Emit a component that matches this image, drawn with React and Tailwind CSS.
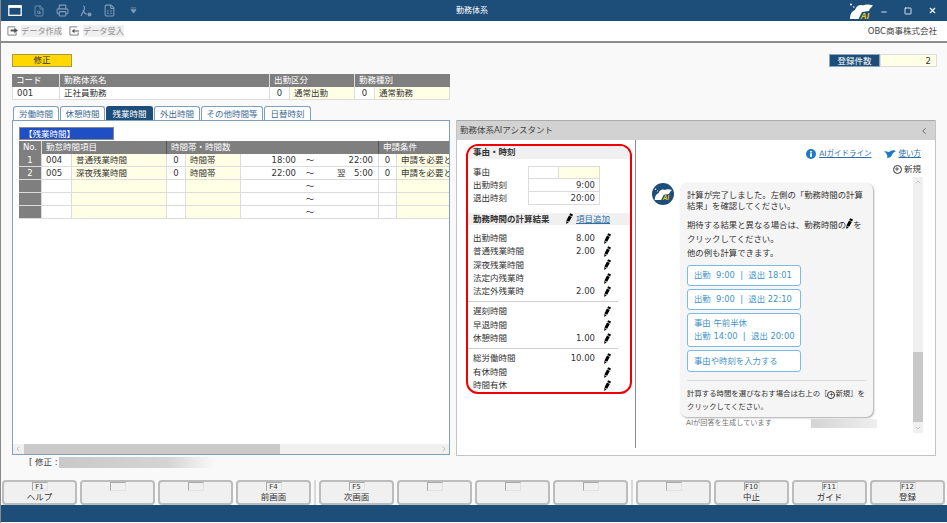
import { Printer, FileSearch, ChevronUp, ChevronDown, ChevronLeft, ChevronRight, Minus, X, Square, Plus, FileSpreadsheet } from "lucide-react";

const Pen = ({ className = "" }) => (
    <svg viewBox="0 0 7 11" className={`w-[7px] h-[11px] shrink-0 ${className}`}>
        <path d="M4.2 0.2 L7 1.6 L6.1 3.4 L3.3 2 Z" fill="#000" />
        <path d="M3 2.6 L5.8 4 L3.2 8.8 L0.4 7.4 Z" fill="#000" />
        <path d="M0.3 8 L2.7 9.2 L0.3 11 Z" fill="#000" />
    </svg>
);

const AiMark = ({ className = "" }) => (
    <svg viewBox="0 0 24 16" className={className}>
        <path d="M1 16 C1 11 3 8 6 7 C7 3 11 1 14 2.5 C17 1 21 1.5 24 2.5 C22 4.5 20.5 6 20 8 L13 9 L9.5 16 Z" fill="#fff" />
        <circle cx="2" cy="1.6" r="1" fill="#fff" />
        <circle cx="4.8" cy="4" r="0.8" fill="#fff" />
        <text x="11.5" y="15.8" fontSize="8.5" fontWeight="700" fontStyle="italic" fill="#f2c811" fontFamily="Liberation Sans, sans-serif">AI</text>
    </svg>
);

const ExportIcon = ({ flip }) => (
    <svg viewBox="0 0 12 12" className="w-[11px] h-[11px] shrink-0">
        <path d="M9 2 H1 V11 H10 V8" fill="none" stroke="#777" strokeWidth="1" />
        {flip
            ? <path d="M11 6 H6 V4 L3 6.5 L6 9 V7 H11 Z" fill="#555" />
            : <path d="M4 7 H8 V9 L12 6 L8 3 V5 H4 Z" fill="#555" />}
    </svg>
);

const tabs = ["労働時間", "休憩時間", "残業時間", "外出時間", "その他時間等", "日替時刻"];
const tabWidths = ["w-[46px]", "w-[45px]", "w-[47px]", "w-[46px]", "w-[62px]", "w-[47px]"];

const rows = [
    { no: "1", code: "004", name: "普通残業時間", n: "0", type: "時間帯", from: "18:00", to: "22:00", c: "0", cond: "申請を必要とする" },
    { no: "2", code: "005", name: "深夜残業時間", n: "0", type: "時間帯", from: "22:00", to: "翌　5:00", c: "0", cond: "申請を必要とする" },
    {},
    {},
    {},
];

const cols = "grid grid-cols-[23px_30px_95px_19px_55px_55px_28px_55px_18px_52px]";

const Cell = ({ className = "", children }) => (
    <div className={`h-[13px] leading-[12px] border-b border-r border-[#dcdcdc] px-[4px] whitespace-nowrap overflow-hidden ${className}`}>{children}</div>
);

const resultGroups = [
    [["出勤時間", "8.00"], ["普通残業時間", "2.00"], ["深夜残業時間", ""], ["法定内残業時", ""], ["法定外残業時", "2.00"]],
    [["遅刻時間", ""], ["早退時間", ""], ["休憩時間", "1.00"]],
    [["総労働時間", "10.00"], ["有休時間", ""], ["時間有休", ""]],
];

const keys = [
    [["F1", "ヘルプ"], ["", ""], ["", ""], ["F4", "前画面"]],
    [["F5", "次画面"], ["", ""], ["", ""], ["", ""]],
    [["", ""], ["F10", "中止"], ["F11", "ガイド"], ["F12", "登録"]],
];

const ChatButton = ({ children, className = "" }) => (
    <div className={`w-[114px] border border-[#7db9e0] rounded-[3px] px-[6px] text-[#3f93c9] bg-white flex flex-col justify-center whitespace-nowrap ${className}`}>{children}</div>
);

const App = () => {
    return (
        <div className="w-[947px] h-[523px] flex flex-col bg-[#f9f9f9] overflow-hidden text-[8.5px] text-[#333] font-['DejaVu_Sans','Noto_Sans_CJK_JP',sans-serif] border-l border-[#8a8a8a]">
            {/* title bar */}
            <div className="h-[21px] shrink-0 bg-[#1d4e79] flex items-center text-white">
                <div className="w-[411px] shrink-0 flex items-center gap-[11px] pl-[7px]">
                    <svg viewBox="0 0 15 12" className="w-[14px] h-[11px]">
                        <rect x="0.75" y="0.75" width="13.5" height="10.5" fill="none" stroke="#fff" strokeWidth="1.4" />
                        <rect x="0.75" y="0.75" width="13.5" height="2.4" fill="#fff" />
                    </svg>
                    <FileSearch className="w-[12px] h-[12px] text-[#7f9cb8]" strokeWidth={1.6} />
                    <Printer className="w-[13px] h-[13px] text-[#7f9cb8]" strokeWidth={2} />
                    <svg viewBox="0 0 12 12" className="w-[12px] h-[12px]">
                        <path d="M3 1 C5 1 5 4 3 7 L1 11 M3 5 C4 8 6 9 7 9" fill="none" stroke="#7f9cb8" strokeWidth="1.2" />
                        <circle cx="9.5" cy="9.5" r="2" fill="#7f9cb8" />
                    </svg>
                    <FileSpreadsheet className="w-[13px] h-[13px] text-[#7f9cb8]" strokeWidth={2} />
                    <svg viewBox="0 0 8 8" className="w-[7px] h-[7px] ml-[3px]">
                        <path d="M1 1 H7 M1 3 H7 L4 7 Z" fill="#7f9cb8" stroke="#7f9cb8" strokeWidth="0.8" />
                    </svg>
                </div>
                <div className="w-[120px] text-center text-[8px]">勤務体系</div>
                <div className="flex-1 flex items-center justify-end">
                    <AiMark className="w-[24px] h-[16px] mr-[7px]" />
                    <Minus className="w-[8px] h-[8px] mr-[16px] translate-y-[1px]" strokeWidth={2.5} />
                    <Square className="w-[8px] h-[8px] mr-[16px]" strokeWidth={2.5} />
                    <X className="w-[9px] h-[9px] mr-[10px]" strokeWidth={3} />
                </div>
            </div>

            {/* toolbar */}
            <div className="h-[22px] shrink-0 bg-white border-b-2 border-[#8c8c8c] flex items-center pl-[6px] pr-[10px]">
                <div className="flex items-center gap-[3px] mr-[7px] text-[8.2px]">
                    <ExportIcon />
                    <span className="bg-[#f0f0f0] text-[#8d8d8d]">データ作成</span>
                </div>
                <div className="flex items-center gap-[3px] text-[8.2px]">
                    <ExportIcon flip />
                    <span className="bg-[#f0f0f0] text-[#8d8d8d]">データ受入</span>
                </div>
                <span className="ml-auto text-[#444]">OBC商事株式会社</span>
            </div>

            <div className="flex-1 flex flex-col pl-[11px] pr-[10px]">
                {/* mode and count */}
                <div className="flex justify-between items-center mt-[11px] h-[13px]">
                    <div className="w-[60px] h-[13px] leading-[11px] text-center bg-[#ffd800] border border-[#a99a3a] text-[#333]">修正</div>
                    <div className="flex w-[108px] h-[13px] leading-[12px]">
                        <div className="w-[51px] bg-[#1d4e79] text-white text-center border border-[#8ea6bd]">登録件数</div>
                        <div className="flex-1 bg-[#ffffe6] border border-[#dcdcdc] text-right pr-[5px]">2</div>
                    </div>
                </div>

                {/* summary table */}
                <div className="mt-[7px] w-[438px] grid grid-cols-[48px_210px_20px_65px_20px_75px] leading-[12px]">
                    <div className="h-[13px] bg-[#7f7f7f] text-white pl-[4px] border-r border-[#ddd]">コード</div>
                    <div className="h-[13px] bg-[#7f7f7f] text-white pl-[4px] border-r border-[#ddd]">勤務体系名</div>
                    <div className="col-span-2 h-[13px] bg-[#7f7f7f] text-white pl-[4px] border-r border-[#ddd]">出勤区分</div>
                    <div className="col-span-2 h-[13px] bg-[#7f7f7f] text-white pl-[4px]">勤務種別</div>
                    <div className="h-[13px] bg-white border border-t-0 border-[#dcdcdc] pl-[4px]">001</div>
                    <div className="h-[13px] bg-white border-b border-r border-[#dcdcdc] pl-[4px]">正社員勤務</div>
                    <div className="h-[13px] bg-white border-b border-r border-[#dcdcdc] text-center">0</div>
                    <div className="h-[13px] bg-[#ffffe6] border-b border-r border-[#dcdcdc] pl-[4px]">通常出勤</div>
                    <div className="h-[13px] bg-white border-b border-r border-[#dcdcdc] text-center">0</div>
                    <div className="h-[13px] bg-[#ffffe6] border-b border-r border-[#dcdcdc] pl-[4px]">通常勤務</div>
                </div>

                <div className="flex mt-[6px] gap-[6px]">
                    {/* left panel */}
                    <div className="w-[438px] shrink-0">
                        <div className="flex h-[14px] gap-[1px] pl-[1px]">
                            {tabs.map((t, i) => (
                                <div
                                    key={t}
                                    className={`${tabWidths[i]} text-center leading-[15px] rounded-t-[3px] border border-b-0 ${i === 2 ? "bg-[#1d4e79] text-white border-[#1d4e79]" : "bg-white text-[#3d6a92] border-[#7f9fbd]"}`}
                                >
                                    {t}
                                </div>
                            ))}
                        </div>
                        <div className="h-[335px] bg-white border border-[#7f9fbd] flex flex-col overflow-hidden">
                            <div className="ml-[6px] mt-[6px] w-[95px] h-[13px] leading-[12px] bg-[#1f4fc4] text-white pl-[4px] border border-[#8a8a8a]">【残業時間】</div>
                            <div className={`ml-[6px] ${cols} w-[430px] mt-[1px]`}>
                                <div className="h-[13px] leading-[12px] bg-[#7f7f7f] text-white text-center border-r border-[#ddd]">No.</div>
                                <div className="col-span-2 h-[13px] leading-[12px] bg-[#7f7f7f] text-white pl-[4px] border-r border-[#555]">勤怠時間項目</div>
                                <div className="col-span-5 h-[13px] leading-[12px] bg-[#7f7f7f] text-white pl-[4px] border-r border-[#555]">時間帯・時間数</div>
                                <div className="col-span-2 h-[13px] leading-[12px] bg-[#7f7f7f] text-white pl-[4px]">申請条件</div>
                                {rows.map((r, i) => (
                                    <div key={i} className="contents">
                                        <Cell className="bg-[#7f7f7f] text-white text-center border-[#bdbdbd]">{r.no}</Cell>
                                        <Cell>{r.code}</Cell>
                                        <Cell className="bg-[#ffffe6]">{r.name}</Cell>
                                        <Cell className="text-center !px-0">{r.n}</Cell>
                                        <Cell className="bg-[#ffffe6]">{r.type}</Cell>
                                        <Cell className="text-right border-r-0 !px-0">{r.from}</Cell>
                                        <Cell className="text-center border-r-0 !px-0">～</Cell>
                                        <Cell className="text-right !pl-0 !pr-[5px]">{r.to}</Cell>
                                        <Cell className="text-center !px-0">{r.c}</Cell>
                                        <Cell className="bg-[#ffffe6] border-r-0">{r.cond}</Cell>
                                    </div>
                                ))}
                            </div>
                            <div className="mt-auto h-[10px] bg-[#f0f0f0] flex items-center text-[#aaa]">
                                <ChevronLeft className="w-[8px] h-[8px] mx-[1px]" />
                                <div className="w-[256px] h-[10px] bg-[#cacaca] ml-[1px]" />
                                <ChevronRight className="w-[8px] h-[8px] ml-auto mr-[1px]" />
                            </div>
                        </div>
                    </div>

                    {/* assistant panel */}
                    <div className="w-[480px] shrink-0 mt-[14px] h-[336px] bg-white border border-[#c4c4c4] flex flex-col">
                        <div className="h-[20px] shrink-0 bg-[#d2d2d2] border-t border-[#aaa] flex items-center justify-between pl-[3px] pr-[6px] text-[#444] -mt-[1px]">
                            <span>勤務体系AIアシスタント</span>
                            <ChevronLeft className="w-[10px] h-[10px] text-[#555]" />
                        </div>
                        <div className="flex-1 flex min-h-0">
                            {/* calculation column */}
                            <div className="w-[179px] shrink-0 border-r border-[#8c8c8c] mb-[7px] pl-[9px]">
                                <div className="mt-[4px] w-[166px] h-[250px] border-[2.5px] border-[#f00000] rounded-[12px] overflow-hidden flex flex-col">
                                    <div className="h-[13px] leading-[13px] bg-[#f0f0f0] pl-[5px] font-bold text-[#333] shrink-0">事由・時刻</div>
                                    <div className="mt-[7px] flex h-[13px] leading-[12px] pl-[5px]">
                                        <span className="w-[55px]">事由</span>
                                        <div className="w-[31px] border border-[#dcdcdc]" />
                                        <div className="w-[41px] bg-[#ffffe6] border-y border-r border-[#dcdcdc]" />
                                    </div>
                                    {[["出勤時刻", "9:00"], ["退出時刻", "20:00"]].map(([l, v]) => (
                                        <div key={l} className="flex h-[13px] leading-[12px] pl-[5px]">
                                            <span className="w-[55px]">{l}</span>
                                            <div className="w-[72px] border-x border-b border-[#dcdcdc] text-right pr-[4px]">{v}</div>
                                        </div>
                                    ))}
                                    <div className="mt-[8px] h-[12px] leading-[12px] bg-[#f0f0f0] flex items-center pl-[5px] shrink-0">
                                        <span className="font-bold w-[93px]">勤務時間の計算結果</span>
                                        <Pen />
                                        <span className="ml-[3px] text-[#2f6fa8] underline">項目追加</span>
                                    </div>
                                    <div className="mt-[7px]">
                                        {resultGroups.map((g, gi) => (
                                            <div key={gi} className={gi ? "mt-[3px] pt-[3px] border-t border-[#cfcfcf] w-[150px] " : "w-[150px]"}>
                                                {g.map(([l, v]) => (
                                                    <div key={l} className="flex items-center h-[13.3px] pl-[5px]">
                                                        <span className="flex-1">{l}</span>
                                                        <span className="w-[40px] text-right">{v}</span>
                                                        <Pen className="ml-[9px] mr-[7px]" />
                                                    </div>
                                                ))}
                                            </div>
                                        ))}
                                    </div>
                                </div>
                            </div>

                            {/* chat column */}
                            <div className="flex-1 flex flex-col min-w-0">
                                <div className="flex justify-end items-center h-[12px] mt-[8px] pr-[14px] text-[#2f6fa8]">
                                    <svg viewBox="0 0 10 10" className="w-[10px] h-[10px] mr-[3px]">
                                        <circle cx="5" cy="5" r="5" fill="#1f7ac4" />
                                        <rect x="4.1" y="4.2" width="1.8" height="3.8" fill="#fff" />
                                        <rect x="4.1" y="2" width="1.8" height="1.5" fill="#fff" />
                                    </svg>
                                    <span className="underline mr-[12px] text-[7.5px]">AIガイドライン</span>
                                    <svg viewBox="0 0 12 8" className="w-[12px] h-[8px] mr-[3px]">
                                        <path d="M0 1 L5 2 C8 0 10 0 12 1 L9 3 C8 6 6 8 3 8 C4 6 3 4 0 1 Z" fill="#1f7ac4" />
                                    </svg>
                                    <span className="underline text-[7.5px]">使い方</span>
                                </div>
                                <div className="flex justify-end items-center h-[12px] mt-[3px] pr-[14px] text-[#333]">
                                    <span className="w-[9px] h-[9px] rounded-full border border-[#333] flex items-center justify-center mr-[2px]">
                                        <Plus className="w-[6px] h-[6px]" strokeWidth={3} />
                                    </span>
                                    新規
                                </div>
                                <div className="flex items-start mt-[2px] pl-[16px] pr-[12px]">
                                    <div className="mt-[6px] w-[22px] h-[22px] rounded-full bg-[#1d4e79] flex items-center justify-center shrink-0">
                                        <AiMark className="w-[18px] h-[12px]" />
                                    </div>
                                    <div className="mt-[6px] ml-[6px] w-[193px] shrink-0">
                                        <div className="h-[234px] bg-[#f5f5f5] rounded-[7px] shadow-[1px_1px_2px_#a8a8a8] px-[7px] pt-[7px] text-[8.4px] text-[#333] flex flex-col">
                                            <p className="leading-[11px]">計算が完了しました。左側の「勤務時間の計算結果」を確認してください。</p>
                                            <p className="leading-[14px] mt-[6px] whitespace-nowrap">
                                                期待する結果と異なる場合は、勤務時間の<Pen className="inline-block align-[-1px]" />を<br />クリックしてください。
                                            </p>
                                            <p className="leading-[14px]">他の例も計算できます。</p>
                                            <ChatButton className="h-[21px] mt-[5px]">出勤&nbsp;&nbsp;9:00&nbsp;&nbsp;|&nbsp;&nbsp;退出 18:01</ChatButton>
                                            <ChatButton className="h-[21px] mt-[3px]">出勤&nbsp;&nbsp;9:00&nbsp;&nbsp;|&nbsp;&nbsp;退出 22:10</ChatButton>
                                            <ChatButton className="h-[34px] mt-[3px] leading-[13px]">
                                                <span>事由 午前半休</span>
                                                <span>出勤 14:00&nbsp;&nbsp;|&nbsp;&nbsp;退出 20:00</span>
                                            </ChatButton>
                                            <ChatButton className="h-[22px] mt-[3px]">事由や時刻を入力する</ChatButton>
                                            <div className="mt-[8px] border-t border-[#dcdcdc] pt-[6px] leading-[13px] whitespace-nowrap text-[7.4px]">
                                                計算する時間を選びなおす場合は右上の［
                                                <span className="inline-flex w-[8px] h-[8px] rounded-full border border-[#333] items-center justify-center align-[-1px]">
                                                    <Plus className="w-[5px] h-[5px]" strokeWidth={3} />
                                                </span>
                                                新規］を<br />クリックしてください。
                                            </div>
                                        </div>
                                        <div className="flex items-center mt-[2px] pl-[6px] text-[#777] text-[7.2px] h-[9px]">
                                            <span>AIが回答を生成しています</span>
                                            <div className="ml-auto -mr-[4px] w-[66px] h-[9px] bg-gradient-to-r from-[#d4d4d4] to-[#efefef]" />
                                        </div>
                                    </div>
                                    <div className="ml-auto w-[10px] h-[256px] bg-[#f0f0f0] flex flex-col items-center text-[#aaa]">
                                        <ChevronUp className="w-[8px] h-[8px] mt-[1px]" />
                                        <div className="w-[10px] h-[70px] bg-[#c8c8c8] mt-[166px]" />
                                        <ChevronDown className="w-[8px] h-[8px] mt-auto mb-[1px]" />
                                    </div>
                                </div>
                            </div>
                        </div>
                    </div>
                </div>

                {/* status line */}
                <div className="flex items-center h-[11px] mt-[1px] pl-[17px] text-[#444]">
                    <span>[ 修正 :</span>
                    <div className="ml-[1px] w-[155px] h-[11px] bg-gradient-to-r from-[#c9c9c9] via-[#d4d4d4] via-70% to-[#f9f9f9]" />
                </div>
            </div>

            {/* function keys */}
            <div className="h-[25px] shrink-0 flex">
                {keys.map((group, gi) => (
                    <div key={gi} className={`flex gap-[3px] ${gi ? "ml-[3px] pl-[3px] border-l-2 border-[#d8d8d8]" : "pl-[1px]"}`}>
                        {group.map(([f, label], i) => (
                            <div key={i} className="w-[75px] h-[25px] bg-[#f0f0f0] border-2 border-[#bcbcbc] rounded-[4px] flex flex-col items-center text-[#333]">
                                <div className="w-[16px] h-[9px] leading-[8px] text-[7px] text-center border border-t-[#a8a8a8] border-l-[#a8a8a8] border-r-[#e2e2e2] border-b-[#e2e2e2]">{f}</div>
                                <div className="leading-[12px]">{label}</div>
                            </div>
                        ))}
                    </div>
                ))}
            </div>

            {/* status bar */}
            <div className="h-[17px] shrink-0 bg-[#1d4e79] mb-[1px]" />
        </div>
    );
};

export default App;
